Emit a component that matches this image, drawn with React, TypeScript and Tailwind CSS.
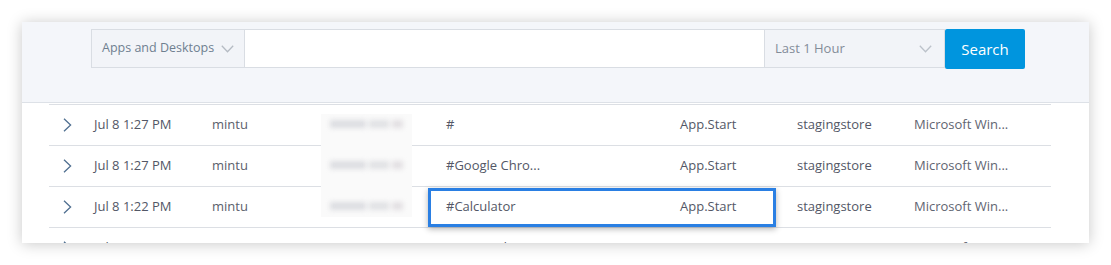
type Row = {
    time: string;
    user: string;
    name: string;
    event: string;
    store: string;
    app: string;
};

const rows: Row[] = [
    { time: 'Jul 8 1:27 PM', user: 'mintu', name: '#', event: 'App.Start', store: 'stagingstore', app: 'Microsoft Win...' },
    { time: 'Jul 8 1:27 PM', user: 'mintu', name: '#Google Chro...', event: 'App.Start', store: 'stagingstore', app: 'Microsoft Win...' },
    { time: 'Jul 8 1:22 PM', user: 'mintu', name: '#Calculator', event: 'App.Start', store: 'stagingstore', app: 'Microsoft Win...' },
    { time: 'Jul 8 1:21 PM', user: 'mintu', name: '#Notepad', event: 'App.Start', store: 'stagingstore', app: 'Microsoft Win...' },
];

function CaretDown({ color }: { color: string }) {
    return (
        <svg width="13" height="8" viewBox="0 0 13 8" fill="none" stroke={color} strokeWidth="1.3">
            <polyline points="0.8,0.8 6.5,6.8 12.2,0.8" />
        </svg>
    );
}

function CaretRight() {
    return (
        <svg width="9" height="14" viewBox="0 0 9 14" fill="none" stroke="#4f6f90" strokeWidth="1.3">
            <polyline points="1,0.8 7.6,7 1,13.2" />
        </svg>
    );
}

export default function App() {
    return (
        <div className="w-[1111px] h-[265px] bg-white pt-[22px] pl-[22px] font-['Open_Sans','Noto_Sans',sans-serif]">
            <div className="relative w-[1067px] h-[221px] overflow-hidden bg-white shadow-[0_1px_14px_rgba(0,0,0,0.22)]">
                {/* Search header */}
                <div className="h-[81px] bg-[#f4f6fa] border-b border-[#dde1e7] pt-[7px] pl-[69px]">
                    <div className="flex h-[40px] w-[934px]">
                        <div className="flex items-center justify-between w-[154px] h-[39px] border border-[#d9dde3] bg-[#f2f4f8] pl-[10px] pr-[10px]">
                            <span className="text-[12.5px] whitespace-nowrap text-[#6f7f90]">Apps and Desktops</span>
                            <CaretDown color="#b5bbc3" />
                        </div>
                        <div className="w-[519px] h-[39px] border-y border-[#d9dde3] bg-white" />
                        <div className="flex items-center justify-between w-[181px] h-[39px] border border-[#d9dde3] bg-[#f2f4f8] pl-[10px] pr-[12px]">
                            <span className="text-[13px] whitespace-nowrap text-[#838c98]">Last 1 Hour</span>
                            <CaretDown color="#bcc2ca" />
                        </div>
                        <button className="w-[80px] h-[40px] rounded-[2px] bg-[#0095de] text-white text-[15px]">
                            Search
                        </button>
                    </div>
                </div>

                {/* Events table */}
                <div className="ml-[27px] mt-[1px] w-[1002px] border-t border-[#dcdfe4]">
                    {rows.map((row, i) => (
                        <div
                            key={i}
                            className="grid grid-cols-[45px_118px_109px_125px_234px_117px_254px] items-center h-[41px] border-b border-[#dcdfe4] text-[13px] text-[#535766] whitespace-nowrap"
                        >
                            <div className="pl-[14px] flex items-center">
                                <CaretRight />
                            </div>
                            <span>{row.time}</span>
                            <span className="text-[#5b606c]">{row.user}</span>
                            <span />
                            <span>{row.name}</span>
                            <span>{row.event}</span>
                            <div className="flex">
                                <span className="w-[117px]">{row.store}</span>
                                <span className="text-[#5f6572]">{row.app}</span>
                            </div>
                        </div>
                    ))}
                </div>

                {/* Redacted IP column */}
                <div className="absolute left-[299px] top-[92px] w-[91px] h-[103px] bg-[#fafafa] flex flex-col gap-[33px] pt-[6px] px-[9px]">
                    {[0, 1, 2].map((i) => (
                        <div key={i} className="flex gap-[3px] h-[8px] blur-[2.5px]">
                            <div className="w-[38px] bg-[#dcdde1]" />
                            <div className="w-[20px] bg-[#e0e1e4]" />
                            <div className="w-[12px] bg-[#e2dfe2]" />
                        </div>
                    ))}
                </div>

                {/* Highlight box */}
                <div className="absolute left-[406px] top-[166px] w-[348px] h-[39px] border-[3px] border-[#2a7fe3] shadow-[0_2px_6px_rgba(0,0,0,0.3)]" />
            </div>
        </div>
    );
}
